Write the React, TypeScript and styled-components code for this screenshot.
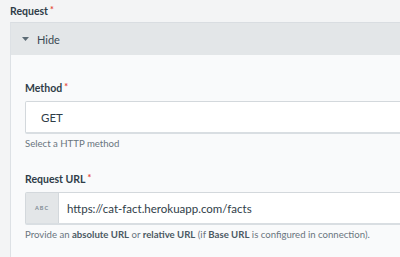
import React from "react";
import styled, { createGlobalStyle } from "styled-components";

const Global = createGlobalStyle`
  html, body { margin: 0; padding: 0; }
  body {
    background: #f3f4f5;
    font-family: "Lato", "Open Sans", sans-serif;
    color: #2b3a45;
    width: 400px;
    height: 257px;
    overflow: hidden;
  }
`;

const Page = styled.div`
  padding: 4px 0 0 10px;
`;

const Label = styled.div`
  font-size: 10.5px;
  font-weight: 700;
  color: #2f3d48;
  line-height: 14px;
  height: 14px;
  display: flex;
  align-items: flex-start;
  white-space: nowrap;
`;

const Star = styled.span`
  color: #e5493a;
  font-size: 9px;
  margin-left: 2px;
  line-height: 11px;
`;

const Panel = styled.div`
  margin-top: 4px;
  border-top: 1px solid #d9dde1;
  border-left: 1px solid #dde1e5;
  background: #f9fafb;
  width: 420px;
  height: 260px;
`;

const Header = styled.div`
  height: 32px;
  background: #e3e6e8;
  display: flex;
  align-items: center;
  padding-left: 11px;
  gap: 8px;
  font-size: 11px;
  color: #3a4953;
`;

const Body = styled.div`
  padding: 26px 0 0 14px;
  display: flex;
  flex-direction: column;
`;

const Field = styled.div`
  display: flex;
  flex-direction: column;
  margin-bottom: 21px;
`;

const Input = styled.div`
  margin-top: 6px;
  width: 380px;
  height: 30px;
  background: #ffffff;
  border: 1px solid #d3d8dc;
  border-bottom: 2px solid #d9dee2;
  border-radius: 2px;
  display: flex;
  align-items: stretch;
  font-size: 11.5px;
  color: #2f3d48;
  white-space: nowrap;
`;

const Value = styled.div<{ $pad: number }>`
  display: flex;
  align-items: center;
  padding-left: ${(p) => p.$pad}px;
`;

const Prefix = styled.div`
  width: 32px;
  background: #e3e6e8;
  border-right: 1px solid #d3d8dc;
  display: flex;
  align-items: center;
  justify-content: center;
  font-size: 5.5px;
  letter-spacing: 1px;
  font-weight: 700;
  color: #7d8a93;
`;

const Help = styled.div`
  margin-top: 3px;
  font-size: 9.6px;
  color: #69757e;
  line-height: 14px;
  white-space: nowrap;
  b { font-weight: 700; color: #4b5963; }
`;

const Caret = () => (
  <svg width="7" height="4" viewBox="0 0 7 4">
    <path d="M0 0 H7 L3.5 4 Z" fill="#5c6b75" />
  </svg>
);

export default function App() {
  return (
    <>
      <Global />
      <Page>
        <Label>
          Request<Star>*</Star>
        </Label>
        <Panel>
          <Header>
            <Caret />
            <span>Hide</span>
          </Header>
          <Body>
            <Field>
              <Label>
                Method<Star>*</Star>
              </Label>
              <Input>
                <Value $pad={15}>GET</Value>
              </Input>
              <Help>Select a HTTP method</Help>
            </Field>
            <Field>
              <Label>
                Request URL<Star>*</Star>
              </Label>
              <Input>
                <Prefix>ABC</Prefix>
                <Value $pad={8}>https://cat-fact.herokuapp.com/facts</Value>
              </Input>
              <Help>
                Provide an <b>absolute URL</b> or <b>relative URL</b> (if <b>Base URL</b> is configured in connection).
              </Help>
            </Field>
          </Body>
        </Panel>
      </Page>
    </>
  );
}
